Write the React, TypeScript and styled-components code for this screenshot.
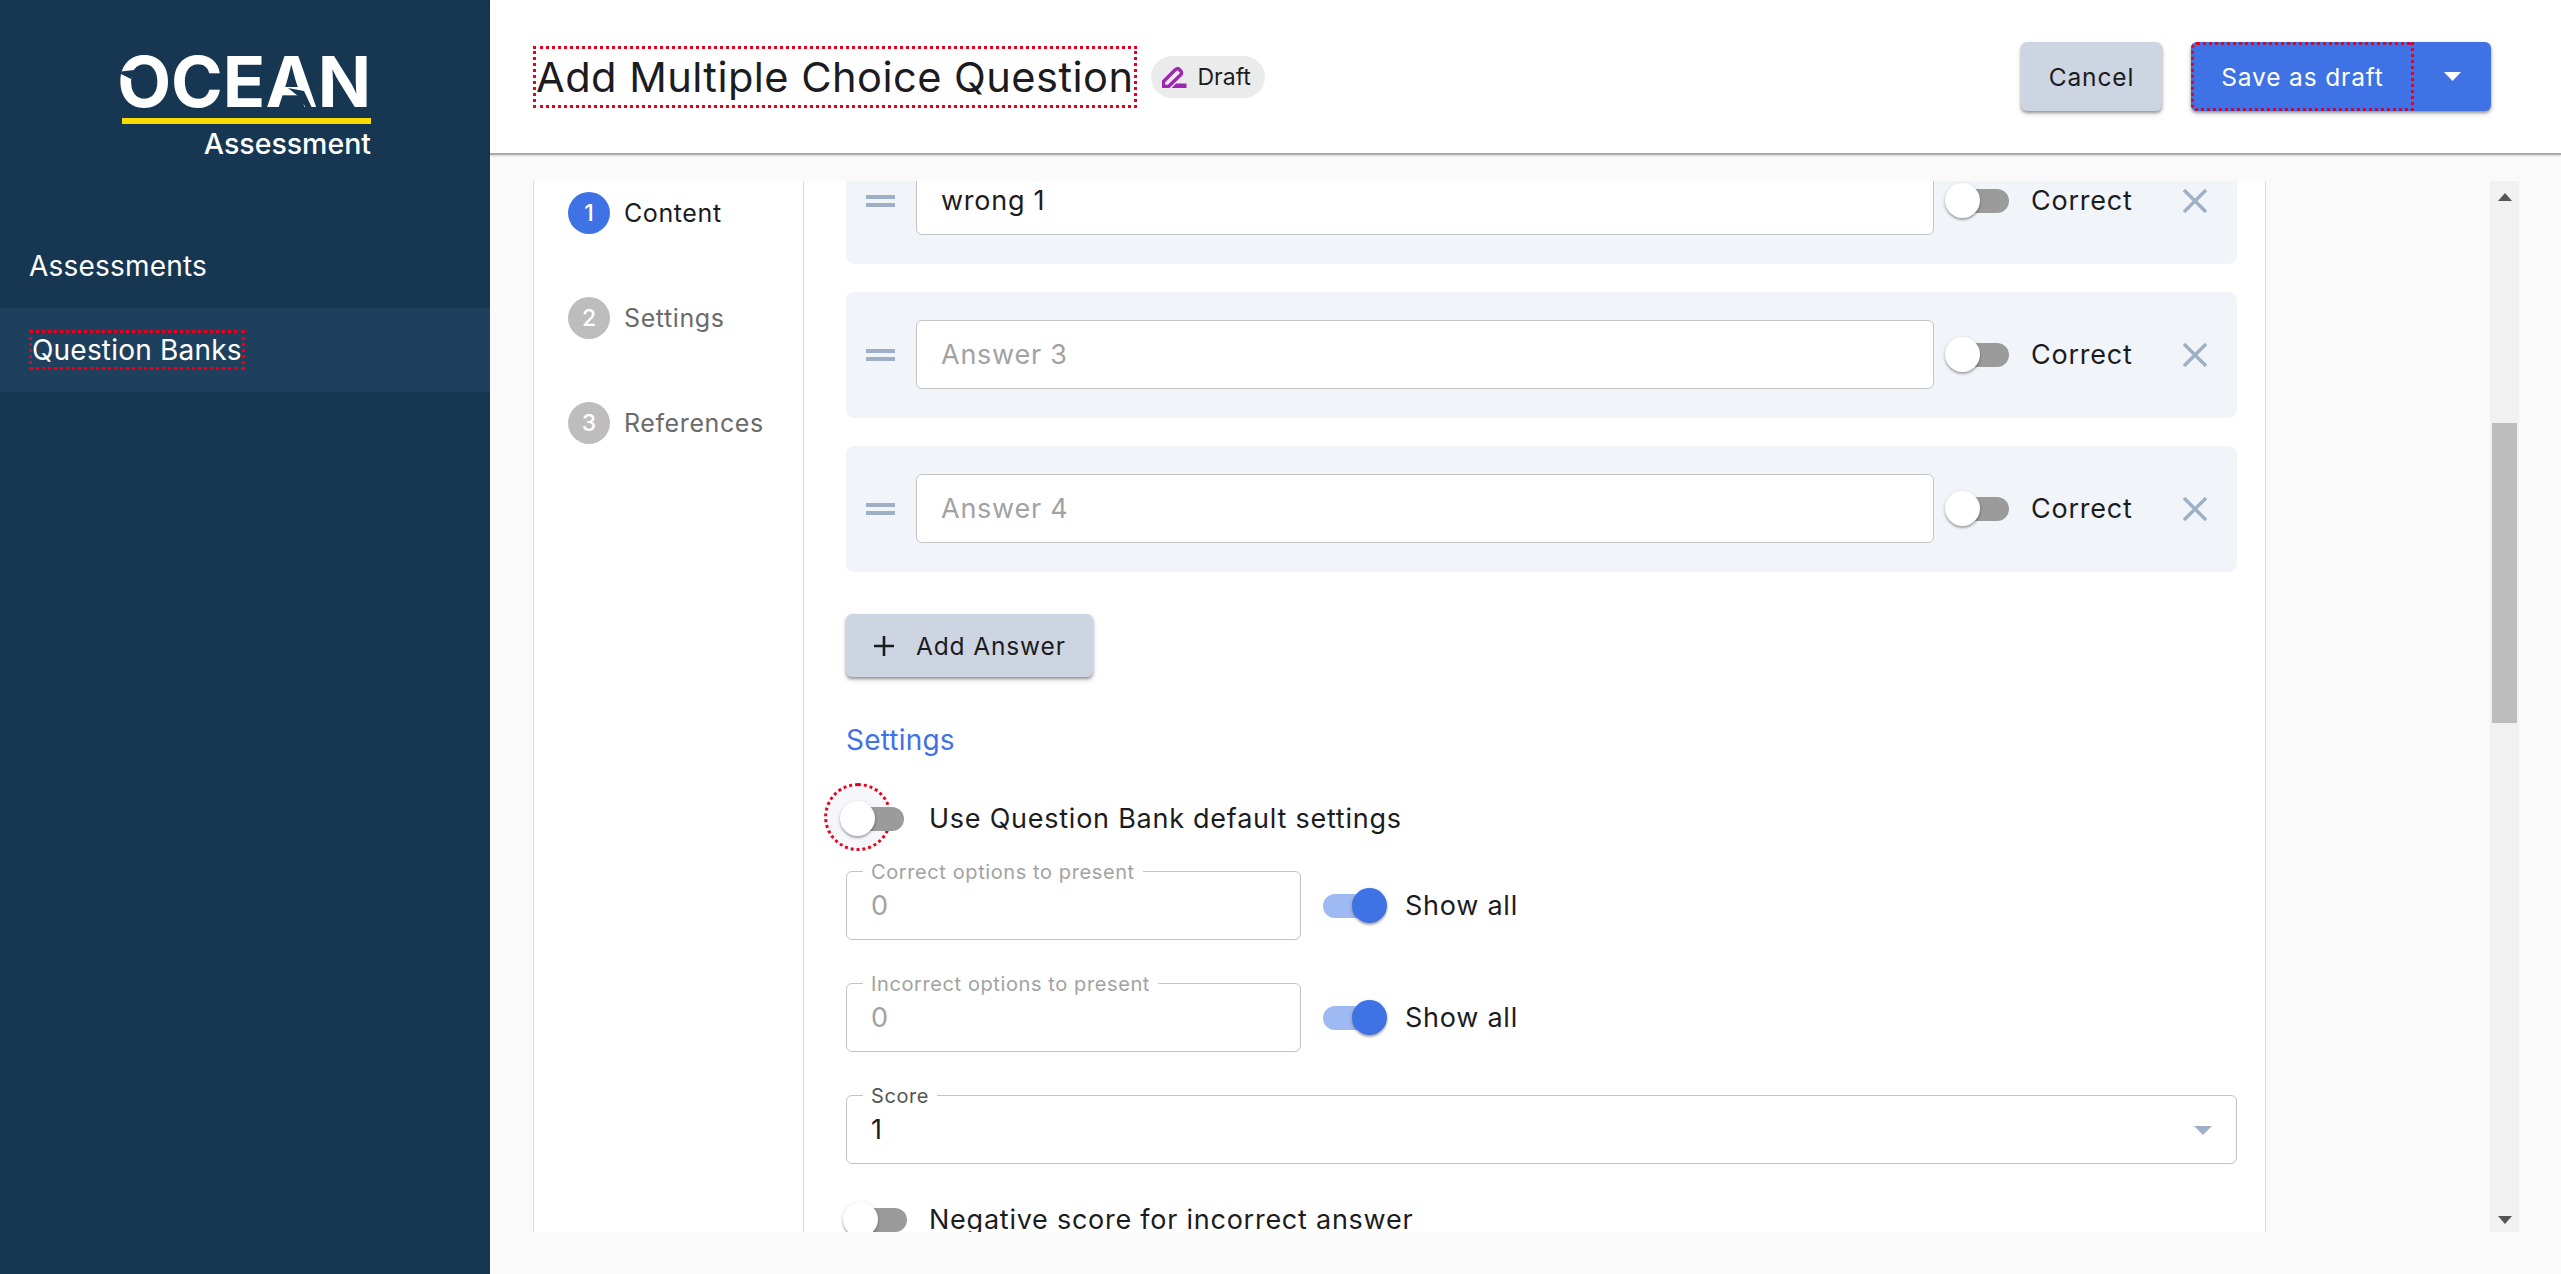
import React from "react";
import styled, { createGlobalStyle } from "styled-components";

const GlobalStyle = createGlobalStyle`
  html, body {
    margin: 0;
    padding: 0;
    background: #fafafa;
    font-family: Inter, "Noto Sans", sans-serif;
    color: #1c1c1e;
  }
  * { box-sizing: border-box; }
`;

const Page = styled.div`
  display: flex;
  width: 2561px;
  height: 1274px;
  overflow: hidden;
`;

const Sidebar = styled.aside`
  width: 490px;
  flex: none;
  background: #163651;
  color: #fff;
`;

const Logo = styled.div`
  position: relative;
  width: 252px;
  height: 224px;
  margin-left: 119px;
  padding-top: 45px;
  display: flex;
  flex-direction: column;
  align-items: flex-end;
`;

const LogoWord = styled.div`
  font-size: 70px;
  line-height: 73px;
  font-weight: 700;
  letter-spacing: 0;
  white-space: nowrap;
`;

const LogoBar = styled.div`
  width: 249px;
  height: 6px;
  background: #f6dc00;
`;

const LogoSub = styled.div`
  margin-top: 3px;
  font-size: 28.5px;
  line-height: 34px;
  font-weight: 500;
  white-space: nowrap;
`;

const LogoCuts = styled.svg`
  position: absolute;
  left: 0;
  top: 0;
`;

const NavItem = styled.div<{ $active?: boolean }>`
  height: 84px;
  padding-left: 29px;
  display: flex;
  align-items: center;
  font-size: 28px;
  letter-spacing: 0.2px;
  background: ${(p) => (p.$active ? "#1f405c" : "transparent")};
`;

const FocusText = styled.span`
  border: 3px dotted #e8001c;
  line-height: 34px;
`;

const Main = styled.main`
  flex: 1;
  display: flex;
  flex-direction: column;
  min-width: 0;
`;

const Header = styled.header`
  height: 155px;
  flex: none;
  display: flex;
  align-items: flex-start;
  padding: 42px 70px 0 43px;
  background: #fff;
  border-bottom: 2px solid #a9a9a9;
  box-shadow: 0 1px 2px rgba(0, 0, 0, 0.15);
`;

const Title = styled.h1`
  margin: 4px 0 0;
  height: 62px;
  display: flex;
  align-items: center;
  padding: 0 1px 0 0;
  border: 3px dotted #e8001c;
  font-size: 41.6px;
  font-weight: 400;
  letter-spacing: 0.45px;
  white-space: nowrap;
`;

const Chip = styled.div`
  margin: 14px 0 0 14px;
  width: 114px;
  height: 42px;
  display: flex;
  align-items: center;
  gap: 10px;
  padding-left: 11px;
  border-radius: 21px;
  background: #ebebeb;
  font-size: 23px;
`;

const Spacer = styled.div`
  flex: 1;
`;

const Button = styled.button<{ $primary?: boolean }>`
  border: 0;
  border-radius: 6px;
  font-family: inherit;
  font-weight: 400;
  font-size: 24.5px;
  letter-spacing: 0.85px;
  color: ${(p) => (p.$primary ? "#fff" : "#1c1c1e")};
  background: ${(p) => (p.$primary ? "#3f72e5" : "#cdd5e2")};
  box-shadow: 0 2px 3px rgba(0, 0, 0, 0.35), 0 3px 6px rgba(0, 0, 0, 0.12);
`;

const CancelButton = styled(Button)`
  width: 141px;
  height: 69px;
  margin-right: 29px;
`;

const SplitButton = styled(Button)`
  width: 300px;
  height: 69px;
  display: flex;
  align-items: stretch;
  padding: 0;
`;

const SplitLabel = styled.span`
  width: 223px;
  display: flex;
  align-items: center;
  justify-content: center;
  border: 3px dotted #e8001c;
  border-radius: 6px 0 0 6px;
`;

const SplitArrow = styled.span`
  flex: 1;
  display: flex;
  align-items: center;
  justify-content: center;
`;

const Body = styled.div`
  flex: 1;
  display: flex;
  min-height: 0;
  padding: 26px 42px 42px 43px;
`;

const Panel = styled.section`
  width: 1733px;
  flex: none;
  display: flex;
  background: #fff;
  border-left: 1px solid #d5dbe5;
  border-right: 1px solid #d5dbe5;
  overflow: hidden;
`;

const Stepper = styled.nav`
  width: 270px;
  flex: none;
  display: flex;
  flex-direction: column;
  gap: 63px;
  padding: 11px 0 0 34px;
  border-right: 1px solid #d5dbe5;
`;

const Step = styled.div<{ $active?: boolean }>`
  display: flex;
  align-items: center;
  gap: 14px;
  height: 42px;
  font-size: 25px;
  letter-spacing: 0.6px;
  font-weight: 400;
  color: ${(p) => (p.$active ? "#1c1c1e" : "#6b6b6b")};
`;

const StepNumber = styled.span<{ $active?: boolean }>`
  width: 42px;
  height: 42px;
  border-radius: 50%;
  display: flex;
  align-items: center;
  justify-content: center;
  color: #fff;
  font-size: 23px;
  font-weight: 500;
  letter-spacing: 0;
  background: ${(p) => (p.$active ? "#3f72e5" : "#bdbdbd")};
`;

const Form = styled.div`
  flex: 1;
  min-width: 0;
  margin-top: -43px;
  padding: 0 28px 0 42px;
`;

const AnswerCard = styled.div`
  height: 126px;
  margin-bottom: 28px;
  padding: 28px 30px 29px 20px;
  display: flex;
  align-items: center;
  border-radius: 8px;
  background: #f1f4f9;
`;

const DragHandle = styled.div`
  width: 29px;
  height: 12px;
  flex: none;
  margin-right: 21px;
  border-top: 4px solid #9db0c8;
  border-bottom: 4px solid #9db0c8;
`;

const AnswerInput = styled.div<{ $placeholder?: boolean }>`
  width: 1018px;
  height: 69px;
  flex: none;
  display: flex;
  align-items: center;
  margin-right: 11px;
  padding-left: 24px;
  background: #fff;
  border: 1px solid #c4c4c4;
  border-radius: 6px;
  font-size: 27px;
  letter-spacing: 0.75px;
  color: ${(p) => (p.$placeholder ? "#a2a2a2" : "#1c1c1e")};
`;

const ToggleBox = styled.span<{ $nudge?: number }>`
  position: relative;
  width: 72px;
  height: 35px;
  flex: none;
  display: block;
  margin-left: ${(p) => p.$nudge ?? 0}px;
  margin-right: ${(p) => -(p.$nudge ?? 0)}px;
`;

const ToggleTrack = styled.span<{ $on?: boolean }>`
  position: absolute;
  left: 8px;
  top: 6px;
  width: 56px;
  height: 24px;
  border-radius: 12px;
  background: ${(p) => (p.$on ? "#9fb9f2" : "#9b9b9b")};
`;

const ToggleThumb = styled.span<{ $on?: boolean }>`
  position: absolute;
  top: 0;
  left: ${(p) => (p.$on ? "37px" : "0")};
  width: 35px;
  height: 35px;
  border-radius: 50%;
  background: ${(p) => (p.$on ? "#3f72e5" : "#fff")};
  box-shadow: 0 2px 2px rgba(0, 0, 0, 0.25), 0 1px 4px rgba(0, 0, 0, 0.14);
`;

const FocusRing = styled.span`
  position: absolute;
  left: -16px;
  top: -18px;
  width: 68px;
  height: 68px;
  border-radius: 50%;
  background: #f5f7fa;
  border: 3px dotted #e8001c;
`;

const CorrectLabel = styled.span`
  margin-left: 14px;
  font-size: 27px;
  letter-spacing: 0.75px;
`;

const RemoveButton = styled.span`
  margin-left: auto;
  display: flex;
`;

const AddButton = styled(Button)`
  width: 247px;
  height: 63px;
  display: flex;
  align-items: center;
  gap: 22px;
  padding: 0 0 0 28px;
  margin-top: 42px;
`;

const SectionTitle = styled.h2`
  margin: 43px 0 0;
  font-size: 28px;
  line-height: 40px;
  font-weight: 400;
  letter-spacing: 0.2px;
  color: #3f72e5;
`;

const ToggleRow = styled.div<{ $top: number }>`
  height: 60px;
  margin: ${(p) => p.$top}px 0 0 -6px;
  display: flex;
  align-items: center;
  gap: 17px;
  font-size: 27px;
  letter-spacing: 0.75px;
`;

const FieldRow = styled.div<{ $top?: number }>`
  display: flex;
  align-items: center;
  gap: 16px;
  margin-top: ${(p) => p.$top ?? 0}px;
  font-size: 27px;
  letter-spacing: 0.75px;
`;

const Field = styled.div<{ $wide?: boolean; $muted?: boolean }>`
  position: relative;
  width: ${(p) => (p.$wide ? "100%" : "455px")};
  height: 69px;
  display: flex;
  align-items: center;
  padding: 0 24px;
  border: 1px solid #c4c4c4;
  border-radius: 6px;
  font-size: 27px;
  color: ${(p) => (p.$muted ? "#a2a2a2" : "#1c1c1e")};
`;

const FieldLabel = styled.label<{ $muted?: boolean }>`
  position: absolute;
  left: 16px;
  top: -11px;
  padding: 0 8px;
  background: #fff;
  font-size: 20px;
  line-height: 22px;
  letter-spacing: 0.6px;
  color: ${(p) => (p.$muted ? "#a2a2a2" : "#555")};
`;

const SelectArrow = styled.span`
  position: absolute;
  right: 24px;
  top: 30px;
  display: flex;
`;

const Scrollbar = styled.div`
  width: 29px;
  flex: none;
  margin-left: 224px;
  display: flex;
  flex-direction: column;
  align-items: center;
  justify-content: space-between;
  padding: 12px 0 8px;
  background: #f1f1f1;
  position: relative;
`;

const ScrollThumb = styled.div`
  position: absolute;
  left: 2px;
  right: 2px;
  top: 242px;
  height: 300px;
  background: #bdbdbd;
`;

const Triangle = ({ color, w, h, up }: { color: string; w: number; h: number; up?: boolean }) => (
  <svg width={w} height={h} viewBox={`0 0 ${w} ${h}`}>
    <polygon points={up ? `0,${h} ${w},${h} ${w / 2},0` : `0,0 ${w},0 ${w / 2},${h}`} fill={color} />
  </svg>
);

const Close = () => (
  <svg width="24" height="24" viewBox="0 0 24 24" fill="none" stroke="#9db0c8" strokeWidth="3.4">
    <path d="M1 1 L23 23 M23 1 L1 23" />
  </svg>
);

const DraftIcon = () => (
  <svg width="25" height="21" viewBox="0 0 25 21" fill="none">
    <path
      d="M1.5 19.5 V14.5 L13.5 2.5 Q15.5 1 17 2.2 L19 4.2 Q20.2 5.8 19 7.5 L6.5 19.5 Z"
      stroke="#9c27b0"
      strokeWidth="3.4"
      strokeLinejoin="round"
    />
    <path d="M14 16.5 H24.5 V21 H9.5 Z" fill="#9c27b0" />
  </svg>
);

const Toggle = ({ on, focus, nudge }: { on?: boolean; focus?: boolean; nudge?: number }) => (
  <ToggleBox $nudge={nudge}>
    {focus && <FocusRing />}
    <ToggleTrack $on={on} />
    <ToggleThumb $on={on} />
  </ToggleBox>
);

const Answer = ({ text, placeholder }: { text: string; placeholder?: boolean }) => (
  <AnswerCard>
    <DragHandle />
    <AnswerInput $placeholder={placeholder}>{text}</AnswerInput>
    <Toggle />
    <CorrectLabel>Correct</CorrectLabel>
    <RemoveButton>
      <Close />
    </RemoveButton>
  </AnswerCard>
);

const App = () => {
  return (
    <Page>
      <GlobalStyle />
      <Sidebar>
        <Logo>
          <LogoWord>OCEAN</LogoWord>
          <LogoBar />
          <LogoSub>Assessment</LogoSub>
          <LogoCuts width="252" height="120" viewBox="119 0 252 120">
            <polygon points="117,72 134,70 131,79" fill="#163651" />
            <polygon points="288,88 304,91 312,108 306,108 298,96" fill="#163651" />
          </LogoCuts>
        </Logo>
        <NavItem>Assessments</NavItem>
        <NavItem $active>
          <FocusText>Question Banks</FocusText>
        </NavItem>
      </Sidebar>
      <Main>
        <Header>
          <Title>Add Multiple Choice Question</Title>
          <Chip>
            <DraftIcon />
            Draft
          </Chip>
          <Spacer />
          <CancelButton>Cancel</CancelButton>
          <SplitButton $primary>
            <SplitLabel>Save as draft</SplitLabel>
            <SplitArrow>
              <Triangle color="#fff" w={17} h={9} />
            </SplitArrow>
          </SplitButton>
        </Header>
        <Body>
          <Panel>
            <Stepper>
              <Step $active>
                <StepNumber $active>1</StepNumber>
                Content
              </Step>
              <Step>
                <StepNumber>2</StepNumber>
                Settings
              </Step>
              <Step>
                <StepNumber>3</StepNumber>
                References
              </Step>
            </Stepper>
            <Form>
              <Answer text="wrong 1" />
              <Answer text="Answer 3" placeholder />
              <Answer text="Answer 4" placeholder />
              <AddButton>
                <svg width="20" height="20" viewBox="0 0 20 20" stroke="#1c1c1e" strokeWidth="2.6">
                  <path d="M10 0 V20 M0 10 H20" />
                </svg>
                Add Answer
              </AddButton>
              <SectionTitle>Settings</SectionTitle>
              <ToggleRow $top={28}>
                <Toggle focus />
                Use Question Bank default settings
              </ToggleRow>
              <FieldRow $top={23}>
                <Field $muted>
                  <FieldLabel $muted>Correct options to present</FieldLabel>0
                </Field>
                <Toggle on nudge={-2} />
                Show all
              </FieldRow>
              <FieldRow $top={43}>
                <Field $muted>
                  <FieldLabel $muted>Incorrect options to present</FieldLabel>0
                </Field>
                <Toggle on nudge={-2} />
                Show all
              </FieldRow>
              <FieldRow $top={43}>
                <Field $wide>
                  <FieldLabel>Score</FieldLabel>1
                  <SelectArrow>
                    <Triangle color="#9db0c8" w={18} h={9} />
                  </SelectArrow>
                </Field>
              </FieldRow>
              <ToggleRow $top={25}>
                <Toggle nudge={3} />
                Negative score for incorrect answer
              </ToggleRow>
            </Form>
          </Panel>
          <Scrollbar>
            <Triangle color="#555" w={14} h={8} up />
            <ScrollThumb />
            <Triangle color="#555" w={14} h={8} />
          </Scrollbar>
        </Body>
      </Main>
    </Page>
  );
};

export default App;
